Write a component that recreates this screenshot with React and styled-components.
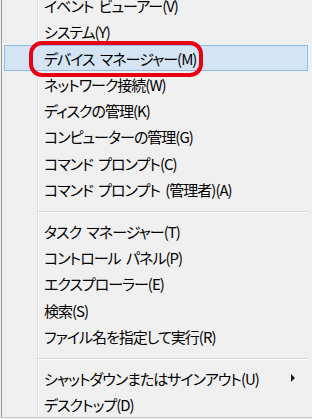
import React from "react";
import styled, { createGlobalStyle } from "styled-components";

const Global = createGlobalStyle`
  html, body {
    margin: 0;
    padding: 0;
    background: #f0f0f0;
    overflow: hidden;
  }
  body {
    width: 312px;
    height: 419px;
  }
`;

const Page = styled.div`
  width: 312px;
  height: 419px;
  overflow: hidden;
  background: #f0f0f0;
`;

const Menu = styled.div`
  margin-left: 1px;
  margin-top: -8px;
  width: 320px;
  border-left: 1px solid #979797;
  border-bottom: 1px solid #c8c8c8;
  padding: 0 2px 0 2px;
  box-sizing: border-box;
  background:
    linear-gradient(
      to right,
      transparent 35px,
      #e0e0e0 35px,
      #e0e0e0 36px,
      #ffffff 36px,
      #ffffff 37px,
      transparent 37px
    ),
    #f0f0f0;
  font-family: "Noto Sans CJK JP", "Noto Sans", sans-serif;
  font-feature-settings: "palt";
  font-size: 15px;
  letter-spacing: -1px;
  word-spacing: 3px;
  color: #000;
`;

const Row = styled.div`
  position: relative;
  display: flex;
  align-items: center;
  width: 304px;
  height: 26.25px;
  box-sizing: border-box;
  padding-left: 39px;
  border: 1px solid ${(p) => (p.$active ? "#8fbbe8" : "transparent")};
  background: ${(p) => (p.$active ? "#d5e4f4" : "transparent")};
  white-space: nowrap;
`;

const Label = styled.span`
  flex: 1;
  line-height: 1;
  padding-top: 1px;
`;

const Arrow = styled.span`
  width: 0;
  height: 0;
  margin-right: 12px;
  border-top: 4px solid transparent;
  border-bottom: 4px solid transparent;
  border-left: 4px solid #1a1a1a;
`;

const Separator = styled.div`
  height: 15.75px;
  padding-top: 9px;
  box-sizing: border-box;
  margin-left: 34px;
  width: 270px;
  &::before {
    content: "";
    display: block;
    height: 1px;
    background: #d7d7d7;
    border-bottom: 1px solid #ffffff;
  }
`;

const Ring = styled.div`
  position: absolute;
  left: 24px;
  top: -5px;
  width: 174px;
  height: 36px;
  box-sizing: border-box;
  border: 4px solid #e60012;
  border-radius: 13px;
  pointer-events: none;
`;

const groups = [
  [
    { t: "イベント ビューアー(V)" },
    { t: "システム(Y)" },
    { t: "デバイス マネージャー(M)", active: true },
    { t: "ネットワーク接続(W)" },
    { t: "ディスクの管理(K)" },
    { t: "コンピューターの管理(G)" },
    { t: "コマンド プロンプト(C)" },
    { t: "コマンド プロンプト (管理者)(A)" },
  ],
  [
    { t: "タスク マネージャー(T)" },
    { t: "コントロール パネル(P)" },
    { t: "エクスプローラー(E)" },
    { t: "検索(S)" },
    { t: "ファイル名を指定して実行(R)" },
  ],
  [
    { t: "シャットダウンまたはサインアウト(U)", sub: true },
    { t: "デスクトップ(D)" },
  ],
];

export default function App() {
  return (
    <Page>
      <Global />
      <Menu>
        {groups.map((g, gi) => (
          <React.Fragment key={gi}>
            {gi > 0 && <Separator />}
            {g.map((it) => (
              <Row key={it.t} $active={it.active}>
                <Label>{it.t}</Label>
                {it.sub && <Arrow />}
                {it.active && <Ring />}
              </Row>
            ))}
          </React.Fragment>
        ))}
      </Menu>
    </Page>
  );
}
